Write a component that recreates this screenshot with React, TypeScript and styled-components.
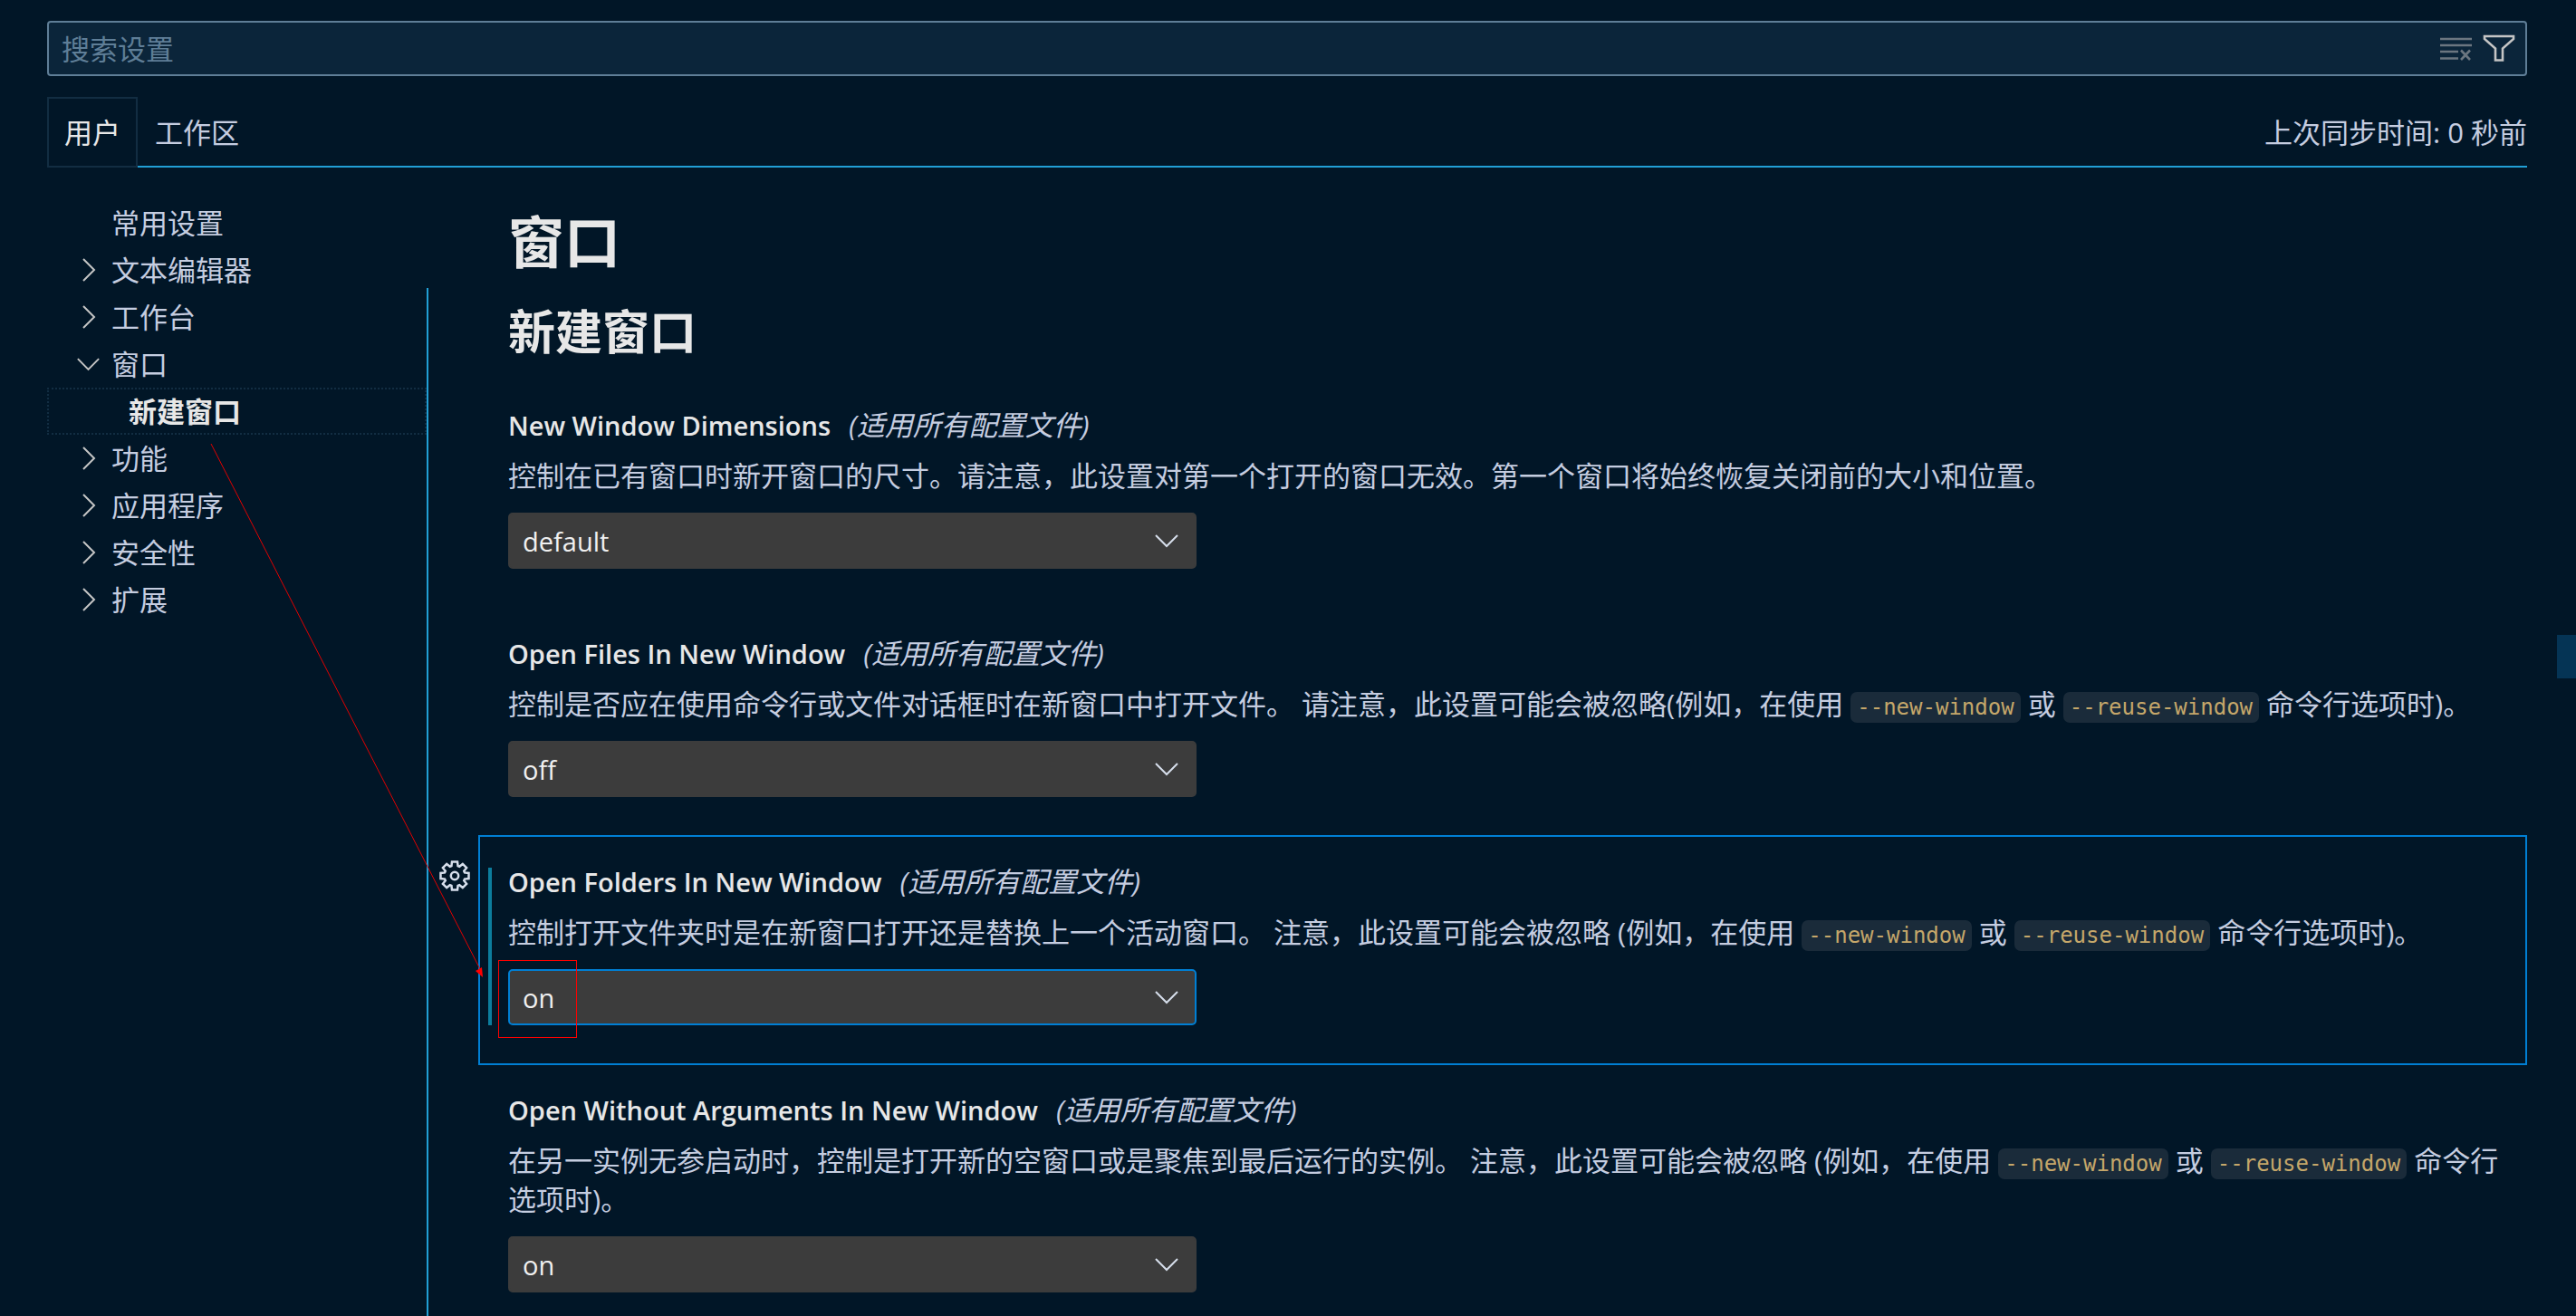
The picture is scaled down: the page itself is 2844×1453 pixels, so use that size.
import React from "react";
import styled, { createGlobalStyle, css } from "styled-components";

const sans = `"Open Sans", "Noto Sans CJK SC", sans-serif`;

const GlobalStyle = createGlobalStyle`
  * { box-sizing: border-box; }
  html, body { margin: 0; background: #011627; }
  body { overflow: hidden; font-family: ${sans}; font-size: 31px; line-height: 43px; color: #c5cde0; }
  button, input, select { font: inherit; color: inherit; margin: 0; }
`;

const Page = styled.main`
  position: relative;
  display: flex;
  flex-direction: column;
  height: 100vh;
  padding: 23px 54px 0 52px;
  overflow: hidden;
`;

const SearchBar = styled.div`
  display: flex;
  align-items: center;
  flex: none;
  height: 61px;
  padding-right: 10px;
  background: #0b253a;
  border: 2px solid #5f7e97;
  border-radius: 4px;
`;

const SearchInput = styled.input`
  flex: 1;
  min-width: 0;
  height: 57px;
  padding: 0 14px;
  background: none;
  border: 0;
  outline: 0;
  &::placeholder { color: #5f7e97; opacity: 1; }
`;

const IconButton = styled.button<{ $dim?: boolean }>`
  display: flex;
  align-items: center;
  justify-content: center;
  width: 38px;
  height: 38px;
  margin-left: 10px;
  padding: 0;
  background: none;
  border: 0;
  color: ${(p) => (p.$dim ? "#6b7680" : "#c5c5c5")};
`;

const TabBar = styled.div`
  display: flex;
  flex: none;
  height: 78px;
  margin-top: 23px;
`;

const Tab = styled.button<{ $active?: boolean }>`
  padding: 2px 19px 0;
  background: none;
  border: 0;
  border-bottom: 2px solid #219fd5;
  ${(p) =>
    p.$active &&
    css`
      padding: 0 17px;
      color: #e7e7e7;
      border: 2px solid #122d42;
    `}
`;

const SyncStatus = styled.div`
  display: flex;
  flex: 1;
  align-items: center;
  justify-content: flex-end;
  padding-top: 2px;
  border-bottom: 2px solid #219fd5;
`;

const Body = styled.div`
  display: flex;
  flex: 1;
  min-height: 0;
`;

const Toc = styled.nav`
  flex: none;
  width: 419px;
  padding-top: 35px;
`;

const TocList = styled.ul`
  margin: 0;
  padding: 0;
  list-style: none;
`;

const TocRow = styled.button<{ $level: number; $selected?: boolean }>`
  display: flex;
  align-items: center;
  gap: 10px;
  width: 100%;
  height: 52px;
  padding: 0 0 0 ${(p) => (p.$level ? 47 : 28)}px;
  background: none;
  border: 2px dotted ${(p) => (p.$selected ? "#122d42" : "transparent")};
  color: ${(p) => (p.$selected ? "#e7e7e7" : "#c5cde0")};
  font-weight: ${(p) => (p.$selected ? 700 : 400)};
`;

const Twistie = styled.span`
  display: flex;
  flex: none;
  width: 31px;
  color: #c5c5c5;
`;

const Sash = styled.div`
  flex: none;
  width: 2px;
  margin-top: 133px;
  background: #219fd5;
`;

const Settings = styled.section`
  flex: 1;
  min-width: 0;
  padding: 39px 0 0 55px;
`;

const heading = css`
  margin: 0 0 0 33px;
  color: #e7e7e7;
  font-weight: 700;
`;

const GroupTitle = styled.h1`
  ${heading}
  font-size: 62px;
  line-height: 86px;
`;

const SubGroupTitle = styled.h2`
  ${heading}
  padding: 20px 0 16px;
  font-size: 52px;
  line-height: 72px;
`;

const Item = styled.article<{ $focused?: boolean }>`
  position: relative;
  margin-bottom: -2px;
  padding: 28px 26px 42px 31px;
  border: 2px solid ${(p) => (p.$focused ? "#007fd4" : "transparent")};
`;

const GearButton = styled.button`
  position: absolute;
  top: 24px;
  left: -47px;
  display: flex;
  padding: 0;
  background: none;
  border: 0;
  color: #d6deeb;
`;

const ModifiedBar = styled.div`
  position: absolute;
  top: 34px;
  bottom: 42px;
  left: 9px;
  width: 4px;
  background: #0c7d9d;
`;

const ItemTitle = styled.h3`
  margin: 0;
  color: #e7e7e7;
  font-size: 29px;
  font-weight: 600;
  line-height: 43px;
`;

const Scope = styled.em`
  margin-left: 20px;
  color: #c5cde0;
  font-size: 31px;
  font-weight: 400;
  line-height: 31px;
`;

const Description = styled.p`
  margin: 13px 0 19px;
`;

const Code = styled.code`
  padding: 3px 7px;
  background: #1a2b3a;
  border-radius: 7px;
  color: #c5a76a;
  font-family: "DejaVu Sans Mono", monospace;
  font-size: 24px;
  line-height: 24px;
`;

const SelectBox = styled.div`
  position: relative;
  width: 760px;
  max-width: 100%;
  height: 62px;
`;

const Select = styled.select<{ $focused?: boolean }>`
  width: 100%;
  height: 100%;
  padding: 0 60px 0 14px;
  appearance: none;
  background: #3c3c3c;
  border: 2px solid ${(p) => (p.$focused ? "#007fd4" : "#3c3c3c")};
  border-radius: 5px;
  outline: 0;
  color: #f0f0f0;
  font-size: 29px;
`;

const SelectArrow = styled.span`
  position: absolute;
  top: 15px;
  right: 17px;
  display: flex;
  color: #d6deeb;
  pointer-events: none;
`;

const ScrollThumb = styled.div`
  position: absolute;
  top: 701px;
  right: 0;
  width: 21px;
  height: 48px;
  background: #053455;
`;

const Annotation = styled.svg`
  position: absolute;
  top: 0;
  left: 0;
  pointer-events: none;
`;

const ChevronRight = () => (
  <svg width="31" height="38" viewBox="0 0 31 38" fill="none" stroke="currentColor" strokeWidth="2">
    <path d="M10 7l12 12-12 12" />
  </svg>
);

const ChevronDown = () => (
  <svg width="32" height="32" viewBox="0 0 32 32" fill="none" stroke="currentColor" strokeWidth="2">
    <path d="M4 10l12 12 12-12" />
  </svg>
);

const ClearIcon = () => (
  <svg width="38" height="38" viewBox="0 0 38 38" fill="none" stroke="currentColor" strokeWidth="2.6">
    <path d="M2 8h35M2 15h35M2 22h20M2 29.500h20M25 20.500l10 10.500M35 20.500l-10 10.500" />
  </svg>
);

const FilterIcon = () => (
  <svg width="38" height="38" viewBox="0 0 38 38" fill="none" stroke="currentColor" strokeWidth="2.6">
    <path d="M3 5h32v3L23 18.500V31.500h-8V18.500L3 8z" />
  </svg>
);

const GearIcon = () => {
  const points: string[] = [];
  for (let i = 0; i < 8; i++) {
    [[-18, 11.5], [-11, 15.8], [11, 15.8], [18, 11.5]].forEach(([deg, r]) => {
      const a = ((i * 45 + deg) * Math.PI) / 180;
      points.push(`${19 + r * Math.sin(a)},${19 - r * Math.cos(a)}`);
    });
  }
  return (
    <svg width="38" height="38" viewBox="0 0 38 38" fill="none" stroke="currentColor" strokeWidth="2.5">
      <polygon points={points.join(" ")} />
      <circle cx="19" cy="19" r="4.2" />
    </svg>
  );
};

type TocEntry = { label: string; state?: "open" | "closed"; level?: number; selected?: boolean };

const toc: TocEntry[] = [
  { label: "常用设置" },
  { label: "文本编辑器", state: "closed" },
  { label: "工作台", state: "closed" },
  { label: "窗口", state: "open" },
  { label: "新建窗口", level: 1, selected: true },
  { label: "功能", state: "closed" },
  { label: "应用程序", state: "closed" },
  { label: "安全性", state: "closed" },
  { label: "扩展", state: "closed" },
];

type Setting = { id: string; title: string; value: string; text: React.ReactNode; focused?: boolean };

const options = ["on", "off", "default"];

const flags = (
  <>
    <Code>--new-window</Code> 或 <Code>--reuse-window</Code>
  </>
);

const settings: Setting[] = [
  {
    id: "dimensions",
    title: "New Window Dimensions",
    value: "default",
    text: "控制在已有窗口时新开窗口的尺寸。请注意，此设置对第一个打开的窗口无效。第一个窗口将始终恢复关闭前的大小和位置。",
  },
  {
    id: "files",
    title: "Open Files In New Window",
    value: "off",
    text: <>控制是否应在使用命令行或文件对话框时在新窗口中打开文件。 请注意，此设置可能会被忽略(例如，在使用 {flags} 命令行选项时)。</>,
  },
  {
    id: "folders",
    title: "Open Folders In New Window",
    value: "on",
    focused: true,
    text: <>控制打开文件夹时是在新窗口打开还是替换上一个活动窗口。 注意，此设置可能会被忽略 (例如，在使用 {flags} 命令行选项时)。</>,
  },
  {
    id: "arguments",
    title: "Open Without Arguments In New Window",
    value: "on",
    text: <>在另一实例无参启动时，控制是打开新的空窗口或是聚焦到最后运行的实例。 注意，此设置可能会被忽略 (例如，在使用 {flags} 命令行选项时)。</>,
  },
];

const SettingItem = ({ id, title, value, text, focused }: Setting) => (
  <Item $focused={focused}>
    {focused && (
      <>
        <GearButton aria-label="更多操作">
          <GearIcon />
        </GearButton>
        <ModifiedBar />
      </>
    )}
    <ItemTitle>
      <label htmlFor={id}>{title}</label>
      <Scope>(适用所有配置文件)</Scope>
    </ItemTitle>
    <Description>{text}</Description>
    <SelectBox>
      <Select id={id} defaultValue={value} $focused={focused}>
        {options.map((o) => (
          <option key={o}>{o}</option>
        ))}
      </Select>
      <SelectArrow>
        <ChevronDown />
      </SelectArrow>
    </SelectBox>
  </Item>
);

export default function App() {
  return (
    <Page>
      <GlobalStyle />
      <SearchBar>
        <SearchInput aria-label="搜索设置" placeholder="搜索设置" />
        <IconButton $dim aria-label="清除搜索">
          <ClearIcon />
        </IconButton>
        <IconButton aria-label="筛选">
          <FilterIcon />
        </IconButton>
      </SearchBar>
      <TabBar>
        <Tab $active>用户</Tab>
        <Tab>工作区</Tab>
        <SyncStatus>上次同步时间: 0 秒前</SyncStatus>
      </TabBar>
      <Body>
        <Toc>
          <TocList>
            {toc.map((t) => (
              <li key={t.label}>
                <TocRow $level={t.level ?? 0} $selected={t.selected}>
                  <Twistie>
                    {t.state === "closed" && <ChevronRight />}
                    {t.state === "open" && <ChevronDown />}
                  </Twistie>
                  {t.label}
                </TocRow>
              </li>
            ))}
          </TocList>
        </Toc>
        <Sash />
        <Settings>
          <GroupTitle>窗口</GroupTitle>
          <SubGroupTitle>新建窗口</SubGroupTitle>
          {settings.map((s) => (
            <SettingItem key={s.id} {...s} />
          ))}
        </Settings>
      </Body>
      <ScrollThumb />
      <Annotation width="660" height="1160" fill="none" stroke="#ff0000">
        <path d="M233 490L530 1070" stroke="#e00000" />
        <path d="M525 1072L532 1068L533 1079z" fill="#ff0000" stroke="none" />
        <rect x="550.5" y="1060.5" width="86" height="85" />
      </Annotation>
    </Page>
  );
}
